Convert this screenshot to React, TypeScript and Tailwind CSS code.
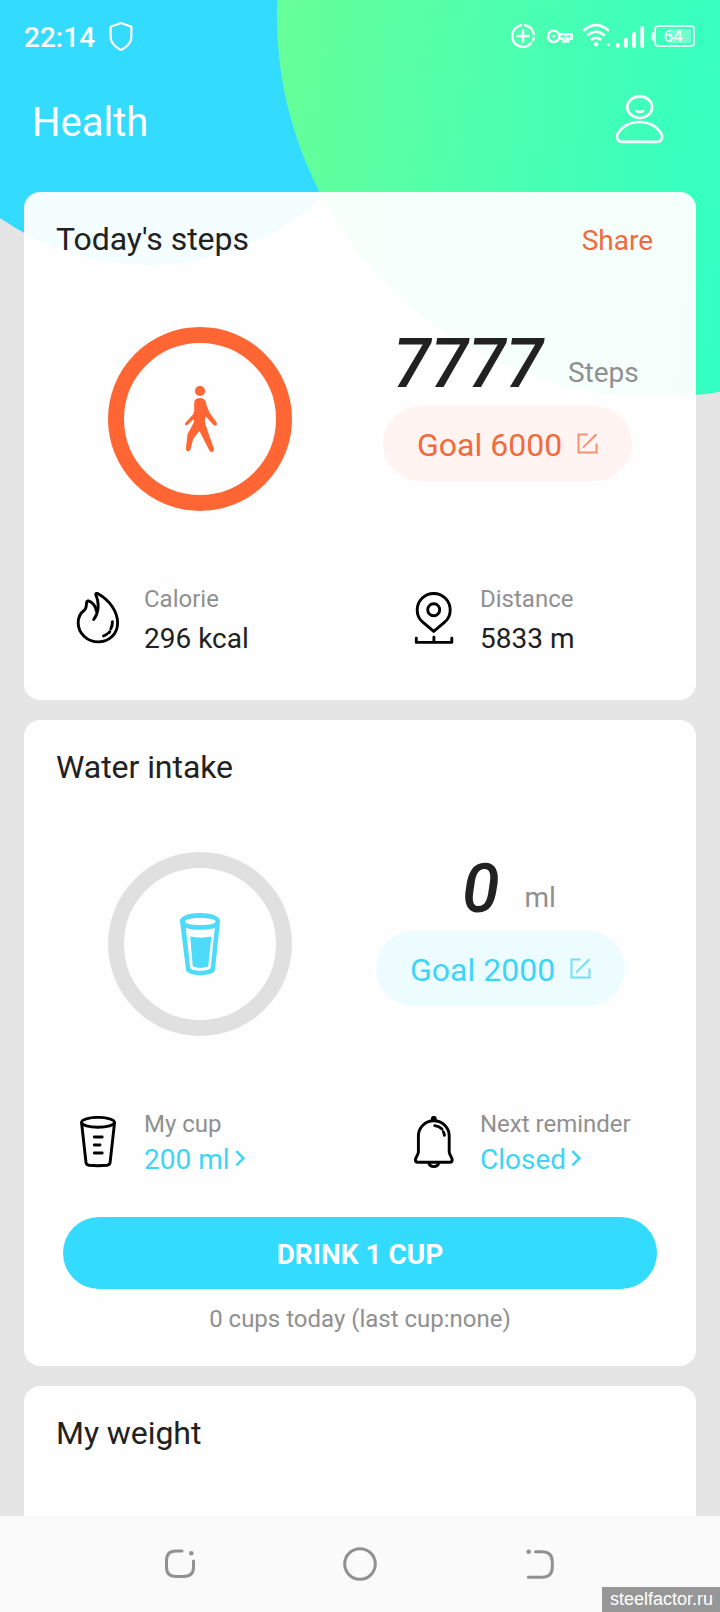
import type { ReactNode } from 'react';
import clsx from 'clsx';

function Backdrop() {
  return (
    <svg className="absolute inset-x-0 top-0" width="720" height="400" viewBox="0 0 720 400">
      <defs>
        <linearGradient id="mint" gradientUnits="userSpaceOnUse" x1="290" y1="0" x2="750" y2="52">
          <stop offset="0" stopColor="#66ff99" />
          <stop offset="0.5" stopColor="#4bffb0" />
          <stop offset="1" stopColor="#33ffc2" />
        </linearGradient>
      </defs>
      <circle cx="148" cy="9" r="256" fill="#33dbff" />
      <circle cx="657" cy="17" r="380" fill="url(#mint)" />
    </svg>
  );
}

function StatusBar() {
  return (
    <div className="flex h-[75px] items-center pl-6 pr-[25px] text-white">
      <span className="text-[28px] leading-8 font-medium">22:14</span>
      <svg className="ml-[14px] -mt-[3px]" width="24" height="30" viewBox="0 0 24 30" fill="none" stroke="currentColor" strokeWidth="2.2" strokeLinejoin="round">
        <path d="M12 2 L22.4 5.8 V16 C22.4 22 18 25.5 13.5 28.2 Q12 29 10.5 28.2 C6 25.5 1.6 22 1.6 16 V5.8 Z" />
      </svg>
      <svg className="ml-auto -mt-[3px]" width="136" height="28" viewBox="510 22 136 28" fill="none" stroke="currentColor" strokeWidth="2.4" strokeLinecap="round">
        <path d="M520 25.2 A11 11 0 0 0 511.2 36 A10.8 10.8 0 0 0 530 43.3 M532 40.5 A11 11 0 0 0 532.7 37.8 M532.7 34 A11 11 0 0 0 524 25.2 M516.5 36 H527.5 M522 30.5 V41.5" />
        <circle cx="552.7" cy="36.3" r="5.7" />
        <circle cx="552.7" cy="36.3" r="1.4" fill="currentColor" stroke="none" />
        <path d="M558.5 34.2 H570.7 V38.5 H567.2 V41.6 H562.5 V38.6 H558.5" strokeLinejoin="miter" />
        <path d="M565 35.6 V40" strokeWidth="1.4" />
        <path d="M583 30.2 Q595 20.2 607 30.2 M587 35 Q595 28.4 603 35 M590.8 39.4 Q595 36.2 599.2 39.4" strokeWidth="2.6" />
        <circle cx="595" cy="44.3" r="2.2" fill="currentColor" stroke="none" />
        <circle cx="607.4" cy="44.7" r="1.5" fill="currentColor" stroke="none" />
        <path d="M616.8 45 V46 M624.8 39.7 V46 M633 33.8 V46 M641.2 28 V46" strokeWidth="3.8" />
      </svg>
      <div className="-mt-[3px] ml-1 flex items-center">
        <div className="h-[9px] w-[3px] rounded-l-full bg-white/80" />
        <div className="relative flex h-[22px] w-[41px] items-center justify-center rounded border-2 border-white/80 pr-[3px]">
          <div className="absolute top-[2px] right-[2px] bottom-[2px] w-[22px] bg-white/30" />
          <span className="relative text-[17px] leading-4">64</span>
        </div>
      </div>
    </div>
  );
}

function UserIcon() {
  return (
    <svg className="-mt-[6px]" width="48" height="49" viewBox="0 0 48 49" fill="none" stroke="#fff" strokeWidth="2.7" strokeLinecap="round">
      <ellipse cx="23.7" cy="12.2" rx="12.4" ry="10.8" />
      <path d="M20.2 16 Q23.7 18 27.2 16" strokeWidth="2.4" />
      <path d="M23.5 27 C33 27 40 31 44.5 37.5 C48 42.5 45 46.8 40.5 46.8 H6.5 C2 46.8 -1 42.5 2.5 37.5 C7 31 14 27 23.5 27 Z" />
    </svg>
  );
}

function EditIcon() {
  return (
    <svg className="-ml-px -mt-px opacity-70" width="21" height="21" viewBox="0 0 21 21" fill="none" stroke="currentColor" strokeWidth="2">
      <path d="M10.5 1.5 H1.5 V19.5 H19.5 V10.5 M19.4 1.2 L6 14.6" />
    </svg>
  );
}

function WalkIcon() {
  return (
    <svg className="ml-[3px]" width="33" height="67" viewBox="0 0 33 67" fill="#ff6633">
      <circle cx="15" cy="5" r="5.1" />
      <path d="M9.2 16.5 Q9.5 12.2 15 12 Q19.5 12 20.8 16 L21.8 20 L24.5 26.5 L31.6 36.6 Q32.6 39.2 30.6 39.8 Q29.2 39.8 28.3 38.8 L20.6 30.2 L19.8 36 L21.5 41.5 L28.8 62.5 Q29.5 65.6 27 66 Q25 66.2 24 63.8 L14.4 45 L8.2 52.8 L5.6 63 Q5 65.2 3 65.2 Q0.6 65 0.9 62.5 L2.6 48 L9 36 L8.8 33 L2.6 38.7 Q1 39.8 0.2 38.8 Q-0.6 37.6 0.7 36.4 L8 28.5 L9.2 25 Z" />
    </svg>
  );
}

function GlassIcon() {
  return (
    <svg width="40" height="62" viewBox="0 0 40 62">
      <path
        fill="#4edbf9"
        fillRule="evenodd"
        d="M0 8 C0 3.5 8.5 0 20 0 C31.5 0 40 3.5 40 8 L35 57 C34 60.5 28 62 20.3 62 C12.5 62 7 60.5 6 57 Z
          M5 8.4 C5 10.6 11.5 12 20.2 12 C29 12 35.6 10.6 35.6 8.4 C35.6 6.4 29 5 20.2 5 C11.5 5 5 6.4 5 8.4 Z
          M5.8 15 L10.2 55 C11.5 57 16 57.7 20.4 57.7 C25 57.7 29.5 57 30.6 55 L34.8 15 C31 16.3 26 16.8 20.2 16.8 C14.5 16.8 9.5 16.3 5.8 15 Z"
      />
      <path fill="#4edbf9" d="M10.2 23.6 Q20.5 25.8 31.4 23.6 L28.2 53.5 Q20.4 56.4 12.8 53.5 Z" />
    </svg>
  );
}

function StatIcon({ children }: { children: ReactNode }) {
  return (
    <svg width="52" height="54" viewBox="0 0 52 54" fill="none" stroke="#000" strokeWidth="2.9" strokeLinecap="round" strokeLinejoin="round">
      {children}
    </svg>
  );
}

const FlameIcon = () => (
  <StatIcon>
    <path d="M21.7 27.5 C26.5 21 27.8 11.5 23.9 3 C23.4 1.3 25 1 26.5 2 C37 8 45.6 19 45.6 31 C45.6 42 37 49.9 26.5 49.9 C15 49.9 6.2 41 6.2 31 C6.2 25 8.5 21 12 18.5 C14.5 16.5 14.5 13.5 14.5 11 C14.5 8.8 16.5 8.3 18.5 9.8 C22 12 23.7 15 24.3 19" />
    <path d="M40.4 29.7 Q40.6 33.5 38.8 36.8 M37.8 39.6 L36.8 40.8 M35 42 Q33.5 43.3 31.5 43.9" />
  </StatIcon>
);

const PinIcon = () => (
  <StatIcon>
    <path d="M25.7 39.4 L14.5 29.9 C11 27 9.2 22.5 9.2 18 A16.5 16.5 0 0 1 42.2 18 C42.2 22.5 40.4 27 36.9 29.9 Z" />
    <circle cx="25.7" cy="17.7" r="6" />
    <path d="M8.3 46.3 V50.4 H43.8 V46.3 M25.9 45.3 V50" />
  </StatIcon>
);

const CupIcon = () => (
  <StatIcon>
    <ellipse cx="26" cy="6.3" rx="16.4" ry="4.9" />
    <path d="M9.6 7 L14 46.5 C14.3 48.4 15.3 49 17 49.3 Q26 50.2 35 49.3 C36.8 49 37.8 48.4 38.1 46.5 L42.5 7" />
    <path d="M22.3 21 H30.2 M22.3 29 H28 M22.3 37 H30.2" />
  </StatIcon>
);

const BellIcon = () => (
  <StatIcon>
    <circle cx="25.8" cy="2.8" r="1.5" fill="#000" />
    <path d="M25.8 4.8 C34.5 4.8 41.2 11.5 41.2 20 V36 C41.2 39 44.2 41 44.2 44 Q44.2 46.2 42 46.2 H9.6 Q7.4 46.2 7.4 44 C7.4 41 10.4 39 10.4 36 V20 C10.4 11.5 17.2 4.8 25.8 4.8 Z" />
    <path d="M21 47.5 Q22 50.6 25.8 50.6 Q29.6 50.6 30.6 47.5" />
    <path d="M26.8 9.6 Q31.2 10.2 34 13 M35.3 15.8 Q36.2 17.2 36.4 19.4" />
  </StatIcon>
);

function Card({ title, action, className, children }: { title: string; action?: string; className?: string; children?: ReactNode }) {
  return (
    <section className={clsx('shrink-0 rounded-[16px] bg-white/95', className)}>
      <div className="flex h-[94px] items-center justify-between pl-8 pr-[43px]">
        <h2 className="text-[32px] leading-10 tracking-[-0.06px] text-[#212121]">{title}</h2>
        {action && <span className="pt-[3px] text-[28px] leading-8 text-[#f26a3d]">{action}</span>}
      </div>
      {children}
    </section>
  );
}

function Ring({ className, children }: { className: string; children: ReactNode }) {
  return (
    <div className={clsx('mt-[3px] ml-[84px] flex size-[184px] items-center justify-center rounded-full border-[16px]', className)}>
      {children}
    </div>
  );
}

function Goal({ className, label }: { className: string; label: string }) {
  return (
    <div className={clsx('mt-[2px] flex h-[75px] w-[249px] items-center rounded-full pl-[34px] text-[32px] leading-10', className)}>
      <span className="mr-4 pt-[2px] whitespace-nowrap">{label}</span>
      <EditIcon />
    </div>
  );
}

function Amount({ value, unit, className }: { value: string; unit: string; className: string }) {
  return (
    <div className={clsx('flex h-20 items-end', className)}>
      <span className="pt-px text-[68px] leading-[79px] font-medium text-[#212121] italic">{value}</span>
      <span className="ml-[25px] pb-[17px] text-[28px] leading-7 text-[#909090]">{unit}</span>
    </div>
  );
}

function Stat({ icon, label, value, link }: { icon: ReactNode; label: string; value: string; link?: boolean }) {
  return (
    <div className="flex w-1/2 gap-5 pl-12">
      <div className={link ? 'pt-[8px]' : 'pt-[9px]'}>{icon}</div>
      <div>
        <div className="text-2xl leading-8 text-[#909090]">{label}</div>
        {link ? (
          <div className="flex items-center text-[28px] leading-10 text-[#40d4f5]">
            {value}
            <svg className="-mt-[3px] ml-[5px]" width="11" height="17" viewBox="0 0 11 17" fill="none" stroke="currentColor" strokeWidth="2.6">
              <path d="M1.4 1.2 L8.4 8.3 L1.4 15.4" />
            </svg>
          </div>
        ) : (
          <div className="mt-1 text-[28px] leading-10 text-[#212121]">{value}</div>
        )}
      </div>
    </div>
  );
}

function NavBar() {
  return (
    <nav className="relative flex h-24 shrink-0 items-center bg-[#fafafa]">
      <svg className="ml-[164px]" width="32" height="32" viewBox="0 0 32 32" fill="none" stroke="#919191" strokeWidth="3" strokeLinecap="round">
        <path d="M18 3 H12 Q2.5 3 2.5 12.5 V19 Q2.5 28.5 12 28.5 H19.5 Q29.5 28.5 29.5 19 V13" />
        <circle cx="27.3" cy="5.3" r="2.3" fill="#919191" stroke="none" />
      </svg>
      <svg className="ml-[147px]" width="34" height="34" viewBox="0 0 34 34" fill="none" stroke="#919191" strokeWidth="3">
        <circle cx="17" cy="17" r="15.3" />
      </svg>
      <svg className="ml-[148px]" width="32" height="32" viewBox="0 0 32 32" fill="none" stroke="#919191" strokeWidth="3" strokeLinecap="round">
        <path d="M10.5 3.7 H17 Q27.3 3.7 27.3 14 V19 Q27.3 29.2 17 29.2 H3.3" />
        <circle cx="3.7" cy="3.8" r="2.3" fill="#919191" stroke="none" />
      </svg>
      <div className="absolute right-0 bottom-0 h-[25px] w-[118px] bg-[#979797] pl-2 font-['Liberation_Sans',sans-serif] text-[18px] leading-[25px] text-white">
        steelfactor.ru
      </div>
    </nav>
  );
}

export default function App() {
  return (
    <div className="relative flex h-[1612px] w-[720px] flex-col overflow-hidden bg-[#e5e5e5] font-[Roboto,sans-serif]">
      <Backdrop />

      <header className="relative h-[192px] shrink-0">
        <StatusBar />
        <div className="flex h-[95px] items-center justify-between pl-8 pr-14">
          <h1 className="text-[40px] leading-12 text-white">Health</h1>
          <UserIcon />
        </div>
      </header>

      <main className="relative flex min-h-0 flex-1 flex-col gap-5 overflow-hidden px-6">
        <Card title="Today's steps" action="Share" className="h-[508px]">
          <div className="flex pt-[38px]">
            <Ring className="border-[#ff6633]">
              <WalkIcon />
            </Ring>
            <div className="ml-[91px]">
              <Amount value="7777" unit="Steps" className="pl-[10px]" />
              <Goal label="Goal 6000" className="bg-[#fff4f1] text-[#f26a3d]" />
            </div>
          </div>
          <div className="mt-[72px] flex">
            <Stat icon={<FlameIcon />} label="Calorie" value="296 kcal" />
            <Stat icon={<PinIcon />} label="Distance" value="5833 m" />
          </div>
        </Card>

        <Card title="Water intake" className="h-[646px]">
          <div className="flex pt-[35px]">
            <Ring className="border-[#e0e0e0]">
              <GlassIcon />
            </Ring>
            <div className="ml-[84px]">
              <Amount value="0" unit="ml" className="pl-[86px]" />
              <Goal label="Goal 2000" className="bg-[#edfcff] text-[#40d4f5]" />
            </div>
          </div>
          <div className="mt-[72px] flex">
            <Stat icon={<CupIcon />} label="My cup" value="200 ml" link />
            <Stat icon={<BellIcon />} label="Next reminder" value="Closed" link />
          </div>
          <button className="mx-auto mt-[37px] flex h-[72px] w-[594px] items-center justify-center rounded-full bg-[#33dbff] pt-[3px] text-[28px] font-bold text-white">
            DRINK 1 CUP
          </button>
          <p className="mt-[14px] text-center text-2xl leading-8 text-[#909090]">0 cups today (last cup:none)</p>
        </Card>

        <Card title="My weight" className="h-[240px]" />
      </main>

      <NavBar />
    </div>
  );
}
